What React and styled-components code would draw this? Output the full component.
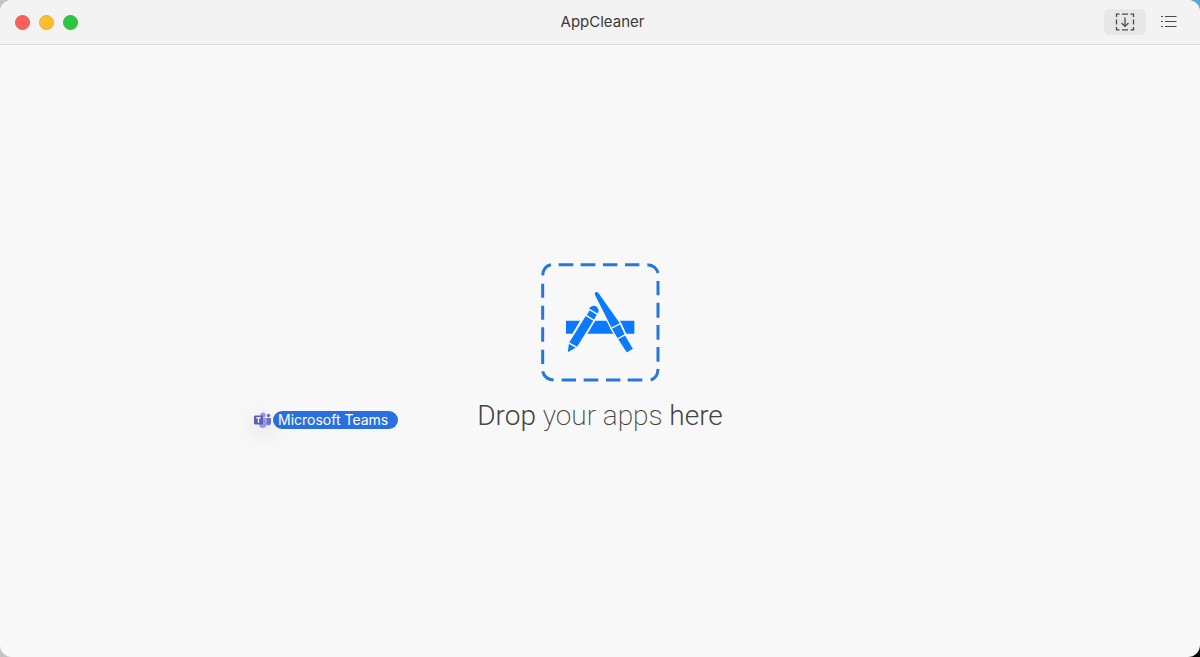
import React from "react";
import styled, { createGlobalStyle } from "styled-components";

const GlobalStyle = createGlobalStyle`
  *, *::before, *::after { box-sizing: border-box; }
  html { background: linear-gradient(90deg, #c4c4c4 50%, transparent 50%), linear-gradient(#55a7d8 50%, #080808 50%); }
  body { margin: 0; font-family: Inter, "Liberation Sans", sans-serif; }
`;

const Window = styled.div`
  display: flex;
  flex-direction: column;
  min-height: 100vh;
  background: #f8f8f8;
  border-radius: 12px;
  overflow: hidden;
  position: relative;
`;

const TitleBar = styled.header`
  display: grid;
  grid-template-columns: 1fr auto 1fr;
  align-items: center;
  height: 45px;
  padding: 0 10px 0 15px;
  background: #f3f3f3;
  border-bottom: 1px solid #dcdcdc;
`;

const Lights = styled.div`
  display: flex;
  gap: 9px;
`;

const Light = styled.button`
  width: 15px;
  height: 15px;
  padding: 0;
  border: 1px solid ${(p) => p.$edge};
  border-radius: 50%;
  background: ${(p) => p.$color};
`;

const Title = styled.h1`
  margin: 0;
  font: 400 15px/20px Inter, sans-serif;
  color: #3a3a3a;
`;

const Tools = styled.div`
  display: flex;
  justify-content: flex-end;
  gap: 2px;
`;

const Tool = styled.button`
  display: grid;
  place-items: center;
  width: 42px;
  height: 26px;
  padding: 0;
  border: 0;
  border-radius: 6px;
  background: ${(p) => (p.$active ? "#e7e7e7" : "transparent")};
  color: #4a4a4a;
`;

const DropZone = styled.main`
  flex: 1;
  display: flex;
  flex-direction: column;
  align-items: center;
  justify-content: center;
  gap: 14px;
  padding-bottom: 4px;
`;

const Prompt = styled.p`
  margin: 0;
  font: 200 28px/40px Roboto, sans-serif;
  color: #444;
`;

const Strong = styled.strong`
  font-weight: 300;
`;

const DraggedApp = styled.div`
  position: absolute;
  left: 253px;
  top: 411px;
  display: flex;
  align-items: center;
  gap: 2px;
`;

const TeamsIcon = styled.svg`
  filter: drop-shadow(0 6px 10px rgba(0, 0, 0, 0.14));
`;

const AppLabel = styled.span`
  padding: 0 10px 0 5px;
  border-radius: 9px;
  background: #2a6fdf;
  color: #fff;
  font: 400 14px/18px Inter, sans-serif;
`;

export default function App() {
  return (
    <Window>
      <GlobalStyle />
      <TitleBar>
        <Lights>
          <Light aria-label="Close" $color="#fc605b" $edge="#ee5853" />
          <Light aria-label="Minimize" $color="#fdbc2e" $edge="#efb02a" />
          <Light aria-label="Zoom" $color="#2ac840" $edge="#27bb3b" />
        </Lights>
        <Title>AppCleaner</Title>
        <Tools>
          <Tool $active aria-label="Drop view">
            <svg width="20" height="18" viewBox="0 0 20 18" fill="none" stroke="currentColor" strokeWidth="1.3">
              <path d="M1.5 4V1.2H4.5M7 1.2H13M15.5 1.2H18.5V4M18.5 6.5V11.5M18.5 14V16.8H15.5M13 16.8H7M4.5 16.8H1.5V14M1.5 11.5V6.5" />
              <path d="M10 4.5V13.2M6.5 10L10 13.4L13.5 10" />
            </svg>
          </Tool>
          <Tool aria-label="List view">
            <svg width="16" height="14" viewBox="0 0 16 14" stroke="currentColor" strokeWidth="1.2">
              <path d="M0 1.5H2M0 6.5H2M0 11.5H2M4 1.5H15.5M4 6.5H15.5M4 11.5H15.5" />
            </svg>
          </Tool>
        </Tools>
      </TitleBar>
      <DropZone>
        <svg width="120" height="120" viewBox="30 21 360 360" aria-hidden="true">
          <g fill="none" stroke="#2577dc" strokeWidth="9">
            <path d="M86 29H130M152 29H196M219 29H262M285 29H328" />
            <path d="M384 78V121M384 143V188M384 210V254M384 276V320" />
            <path d="M95 375H138M161 375H205M228 375H271M293 375H337" />
            <path d="M38 86V128M38 152V194M38 217V260M38 284V327" />
            <path d="M38 61Q40 33 63 29M352 29Q378 31 384 54M384 342Q383 369 362 375M71 375Q44 373 38 349" />
          </g>
          <g fill="#0a7aff" stroke="#f8f8f8" strokeWidth="4">
            <path stroke="none" d="M108 197H313V236H108Z" />
            <path strokeWidth="10" paintOrder="stroke" d="M113 291L117 263L180 157Q190 149 200 155Q208 163 205 172L142 277Z" />
            <path d="M111 295L115 263L142 278Z" />
            <path d="M115 263L167 180L193 196L142 278Z" />
            <path d="M168 181L178 163L203 178L193 197Z" />
            <path strokeWidth="8" paintOrder="stroke" d="M195 120Q193 112 199 111Q204 111 207 116L271 207L286 240L309 281L291 293L265 251L245 219Z" />
            <path d="M243 220L271 206L287 240L262 252Z" />
            <path d="M262 252L286 239L311 282L290 295Z" />
          </g>
        </svg>
        <Prompt>
          <Strong>Drop</Strong> your apps <Strong>here</Strong>
        </Prompt>
      </DropZone>
      <DraggedApp>
        <TeamsIcon width="18" height="18" viewBox="0 0 18 18" aria-hidden="true">
          <circle cx="10" cy="4" r="2.6" fill="#9297e6" />
          <circle cx="15.5" cy="4.6" r="1.8" fill="#6d74d0" />
          <path d="M12 7H18V12Q17.5 14.5 14.5 14.5Z" fill="#6d74d0" />
          <path d="M6 7H14V13Q13 17 9.5 17Q6 17 6 13Z" fill="#9297e6" />
          <rect x="1" y="4.5" width="9" height="9" rx="1" fill="#5d60b8" />
          <path d="M3.2 6.8H7.8M5.5 6.8V11.7" stroke="#fff" strokeWidth="1.2" />
        </TeamsIcon>
        <AppLabel>Microsoft Teams</AppLabel>
      </DraggedApp>
    </Window>
  );
}
